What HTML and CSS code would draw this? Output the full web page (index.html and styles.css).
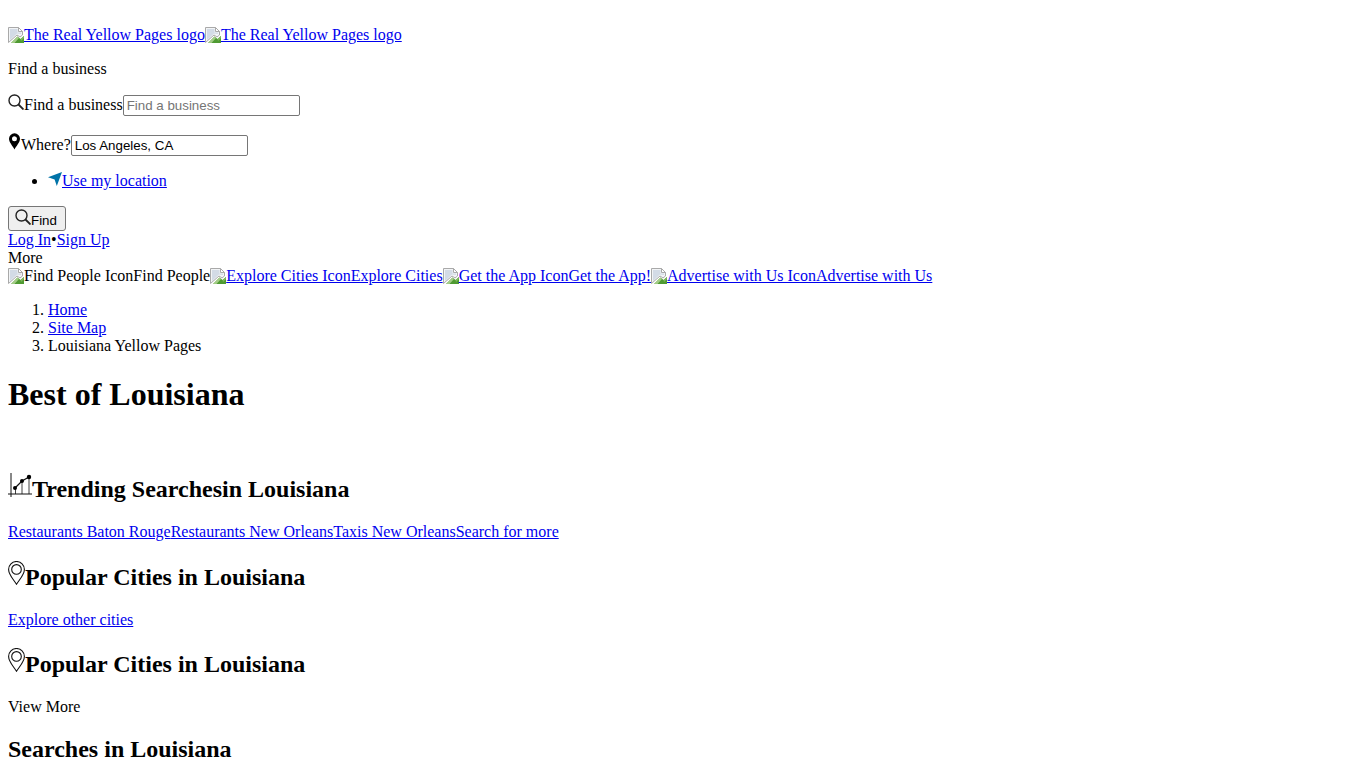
FILE: index.html
```html
<!DOCTYPE html>
<html lang="en">
<head>
<meta charset="utf-8">
<title>Best of Louisiana</title>
<link rel="stylesheet" href="styles.css">
</head>
<body>
<svg width="0" height="0" class="defs" aria-hidden="true">
  <defs>
    <symbol id="broken" viewBox="0 0 16 16">
      <path d="M.5 .5H10.5L14.5 4.5V8L12 10 9 8 .5 15.5Z" fill="#f2f4f6" stroke="#a9a9a9"/>
      <path d="M10.5 .5V4.5H14.5Z" fill="#fff" stroke="#a9a9a9"/>
      <path d="M2 2H9.5V5.5H13V7L9 6.5 2 13Z" fill="#d3dbe6"/>
      <path d="M3 16 9.5 9.5 12.5 12 16 9V16Z" fill="#4f9a32"/>
      <path d="M3 16 9.5 9.5 11 11 6.5 16Z" fill="#a3cc86"/>
      <path d="M12.5 12 16 9V11L13 14Z" fill="#7fb85f"/>
    </symbol>
    <symbol id="search" viewBox="0 0 16 16">
      <circle cx="6.5" cy="6.5" r="5.5" fill="none" stroke="#222" stroke-width="1.4"/>
      <path d="M10.5 10.5 15.5 15.5" stroke="#222" stroke-width="1.8" fill="none"/>
    </symbol>
    <symbol id="pin-outline" viewBox="0 0 17 24">
      <path d="M8.5 23.3C5.5 18.5 .6 13.5 .6 8.4a7.9 7.9 0 0 1 15.8 0C16.4 13.5 11.5 18.5 8.5 23.3Z" fill="none" stroke="#111" stroke-width="1.1"/>
      <circle cx="8.5" cy="8.4" r="4.8" fill="none" stroke="#111" stroke-width="1.1"/>
    </symbol>
  </defs>
</svg>

<div class="spacer"></div>
<div><a href="#"><svg class="broken"><use href="#broken"/></svg>The Real Yellow Pages logo</a><a href="#"><svg class="broken"><use href="#broken"/></svg>The Real Yellow Pages logo</a></div>

<form>
  <p>Find a business</p>
  <div class="field">
    <svg class="icon-search"><use href="#search"/></svg><label for="what">Find a business</label><input id="what" class="text-input" type="text" placeholder="Find a business">
  </div>
  <div class="field">
    <svg class="icon-pin" viewBox="0 0 13 18"><path d="M6.5 17.5C4.6 13.8 1 10.5 1 6.8a5.5 5.5 0 0 1 11 0C12 10.5 8.4 13.8 6.5 17.5ZM6.5 4.3a2.5 2.5 0 1 0 0 5 2.5 2.5 0 0 0 0-5Z" fill-rule="evenodd"/></svg><label for="where">Where?</label><input id="where" class="text-input" type="text" value="Los Angeles, CA">
  </div>
  <ul>
    <li><svg class="icon-locate" viewBox="0 0 14 14"><path d="M14 0 8.8 14 6.6 7.4 0 5.2Z"/></svg><a href="#">Use my location</a></li>
  </ul>
  <button class="find" type="button"><svg class="icon-search"><use href="#search"/></svg>Find</button>
</form>

<div><a href="#">Log In</a>•<a href="#">Sign Up</a></div>
<div>More</div>
<div><svg class="broken"><use href="#broken"/></svg>Find People IconFind People<a href="#"><svg class="broken"><use href="#broken"/></svg>Explore Cities IconExplore Cities</a><a href="#"><svg class="broken"><use href="#broken"/></svg>Get the App IconGet the App!</a><a href="#"><svg class="broken"><use href="#broken"/></svg>Advertise with Us IconAdvertise with Us</a></div>

<ol>
  <li><a href="#">Home</a></li>
  <li><a href="#">Site Map</a></li>
  <li>Louisiana Yellow Pages</li>
</ol>

<h1>Best of Louisiana</h1>
<div class="spacer"></div>

<h2><svg class="icon-trend" viewBox="0 0 24 24">
  <path d="M3 0V24M0 21H24" stroke="#111" stroke-width="1" fill="none"/>
  <path d="M7.5 21V15M14 21V8M21 21V4" stroke="#111" stroke-width=".8" fill="none"/>
  <path d="M7 15 14 8 21 4" stroke="#111" stroke-width="1.3" fill="none"/>
  <circle cx="7" cy="15" r="2"/><circle cx="14" cy="8" r="2"/><circle cx="21" cy="4" r="2.2"/>
</svg>Trending Searches<span>in Louisiana</span></h2>
<div><a href="#">Restaurants Baton Rouge</a><a href="#">Restaurants New Orleans</a><a href="#">Taxis New Orleans</a><a href="#">Search for more</a></div>

<h2><svg class="icon-pin-outline"><use href="#pin-outline"/></svg>Popular Cities in Louisiana</h2>
<div><a href="#">Explore other cities</a></div>

<h2><svg class="icon-pin-outline"><use href="#pin-outline"/></svg>Popular Cities in Louisiana</h2>
<div>View More</div>

<h2>Searches in Louisiana</h2>
</body>
</html>
```

FILE: styles.css
```css
html {
  background: #fff;
}

body {
  font-family: "Liberation Serif", "Times New Roman", serif;
  font-size: 16px;
  color: #000;
}

.defs {
  position: absolute;
}

.spacer {
  height: 18px;
}

.broken {
  width: 16px;
  height: 16px;
  vertical-align: -3px;
}

.field {
  margin: 16px 0;
}

.icon-search {
  width: 16px;
  height: 16px;
}

.icon-pin {
  width: 13px;
  height: 18px;
}

.icon-locate {
  width: 14px;
  height: 14px;
  fill: #0073a8;
}

.icon-trend {
  width: 24px;
  height: 24px;
}

.icon-pin-outline {
  width: 17px;
  height: 24px;
}

.text-input {
  box-sizing: border-box;
  width: 177px;
  height: 21px;
  padding: 1px 3px;
  border: 1px solid #767676;
  border-radius: 2px;
  font-family: "Liberation Sans", Arial, sans-serif;
  font-size: 13.3333px;
  color: #000;
}

.text-input::placeholder {
  color: #757575;
}

.find {
  box-sizing: border-box;
  display: block;
  width: 58px;
  height: 25px;
  padding: 1px 6px;
  border: 1px solid #767676;
  border-radius: 3px;
  background: #efefef;
  font-family: "Liberation Sans", Arial, sans-serif;
  font-size: 13.3333px;
  color: #000;
  text-align: left;
}
```
